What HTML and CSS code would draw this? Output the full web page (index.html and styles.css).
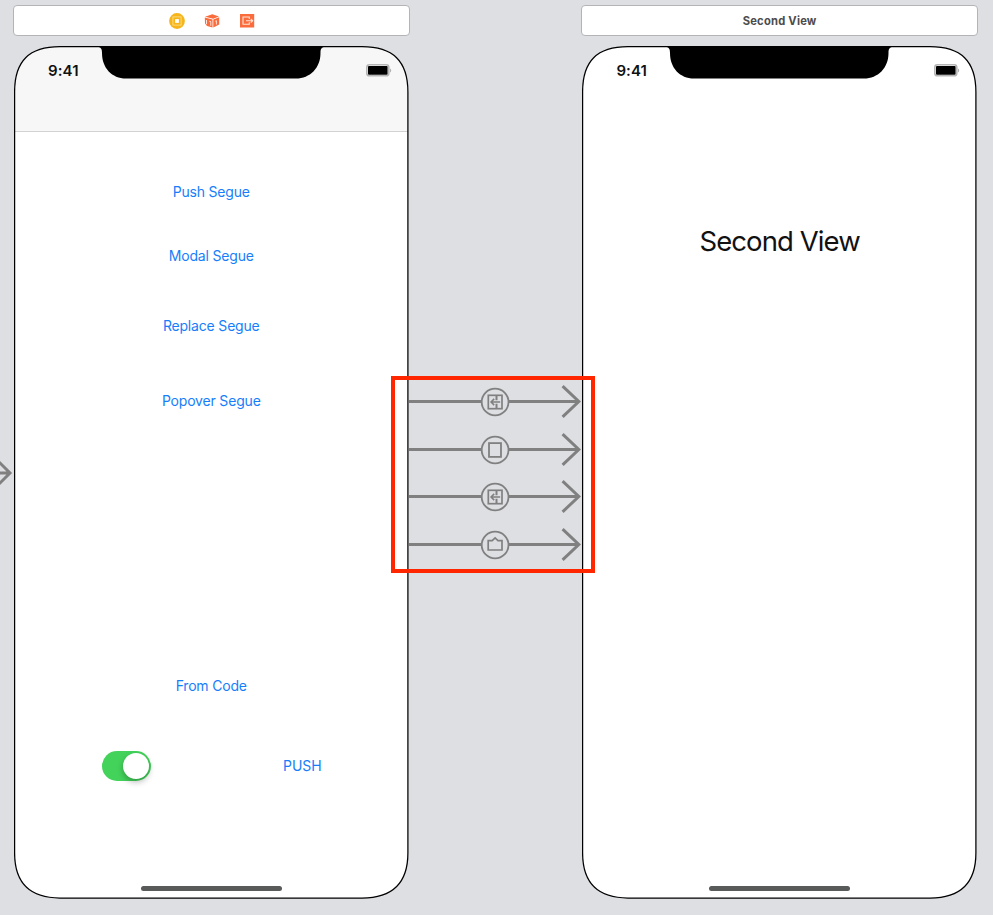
FILE: index.html
```html
<!DOCTYPE html>
<html lang="en">
<head>
<meta charset="utf-8">
<title>Storyboard</title>
<link rel="stylesheet" href="styles.css">
</head>
<body>
<svg class="defs" width="0" height="0" aria-hidden="true">
  <defs>
    <path id="outline" d="M.6 46C.6 15 15 .7 46 .7H348C379 .7 393.9 15 393.9 46V807C393.9 837 379 852 348 852H46C15 852 .6 837 .6 807Z"/>
    <clipPath id="screen"><use href="#outline"/></clipPath>
    <path id="notch" d="M83 .5C87 1 88 3 88 7C88 22 98 32.5 112 32.5H282C296 32.5 306.5 22 306.5 7C306.5 3 307.5 1 311.5 .5Z"/>
    <g id="battery">
      <rect x=".8" y=".8" width="22" height="11" rx="2.6" fill="#fff" stroke="#b5b5b5" stroke-width="1.6"/>
      <rect x="2" y="2" width="19.6" height="8.8" rx="1"/>
      <path d="M24 4.4C25.6 4.9 25.6 7.9 24 8.4Z" fill="#b0b0b0"/>
    </g>
    <g id="segue" fill="none" stroke="#808080">
      <path d="M0 16.5H73M100 16.5H170" stroke-width="3"/>
      <path d="M153.6 1.2L169.8 16.5L153.6 31.8" stroke-width="3"/>
      <circle cx="86.1" cy="17" r="13.4" stroke-width="1.8"/>
    </g>
    <g id="show" fill="none" stroke="#808080">
      <rect x="79.3" y="10.3" width="13.7" height="13.4" stroke-width="1.7"/>
      <path d="M87.5 10.5V15.2M87.5 18.8V24" stroke-width="2"/>
      <path d="M82 17H91.2M85.2 13.9L82.1 17L85.2 20.1" stroke-width="1.6"/>
    </g>
  </defs>
</svg>
<main class="canvas">
  <section class="scene">
    <header class="dock icons">
      <svg width="16" height="16" viewBox="0 0 16 16"><circle cx="8" cy="8" r="7.9" fill="#f5b51b"/><rect x="3.9" y="3.9" width="8.2" height="8.2" fill="none" stroke="#ffe394" stroke-width=".8"/><rect x="6.1" y="6.1" width="3.8" height="3.8" fill="#fff"/></svg>
      <svg width="16" height="16" viewBox="0 0 16 16"><path d="M1 3.8L8.3 1.2L15 3.5L9.2 5.7Z M.8 4.6L8.5 6.4V14.5L3 13L1 10.5Z M9.3 6.4L15.2 4.2V11.4L9.3 14.5Z" fill="#fa6c3c"/><path d="M2.5 7V11.2M5.2 8.2L6.8 8.6V12.8M11.3 8.2L12.4 7.7V11.5" fill="none" stroke="#fff" stroke-width=".8"/></svg>
      <svg width="16" height="16" viewBox="0 0 16 16"><rect x="1" y="1" width="14.2" height="13.5" fill="#fa6c3c"/><path d="M10.3 6.1V4H4V11.3H10.3V9.3M7 7.7H13.7M11.8 5.8L13.7 7.7L11.8 9.6" fill="none" stroke="#ffe3d8" stroke-width="1.1"/></svg>
    </header>
    <div class="phone">
      <svg class="frame" width="395" height="853" viewBox="0 0 395 853">
        <use href="#outline" fill="#fff"/>
        <g clip-path="url(#screen)"><rect width="395" height="85" fill="#f7f7f7"/><rect y="85" width="395" height="1" fill="#d2d2d2"/></g>
        <use href="#outline" fill="none" stroke="#000" stroke-width="1.25"/><use href="#notch"/>
      </svg>
      <div class="status"><span>9:41</span><svg width="26" height="13"><use href="#battery"/></svg></div>
      <div class="actions">
        <a class="push">Push Segue</a>
        <a class="modal">Modal Segue</a>
        <a class="replace">Replace Segue</a>
        <a class="popover">Popover Segue</a>
        <a class="code">From Code</a>
      </div>
      <div class="controls"><span class="switch"><i></i></span><a class="push-button">PUSH</a></div>
      <div class="home"></div>
    </div>
  </section>
  <section class="segues">
    <svg width="173" height="34"><use href="#segue"/><use href="#show"/></svg>
    <svg width="173" height="34"><use href="#segue"/><rect x="80" y="10.1" width="12" height="13.8" fill="none" stroke="#808080" stroke-width="1.8"/></svg>
    <svg width="173" height="34"><use href="#segue"/><use href="#show"/></svg>
    <svg width="173" height="34"><use href="#segue"/><path d="M79.2 12.6H83.2L86.1 9.9L89 12.6H93V22H79.2Z" fill="none" stroke="#808080" stroke-width="1.7"/></svg>
  </section>
  <section class="scene">
    <header class="dock title">Second View</header>
    <div class="phone">
      <svg class="frame" width="395" height="853" viewBox="0 0 395 853"><use href="#outline" fill="#fff" stroke="#000" stroke-width="1.25"/><use href="#notch"/></svg>
      <div class="status"><span>9:41</span><svg width="26" height="13"><use href="#battery"/></svg></div>
      <h1>Second View</h1>
      <div class="home"></div>
    </div>
  </section>
  <svg class="entry" width="13" height="30"><path d="M0 15H10M-5 0L10 15L-5 30" fill="none" stroke="#808080" stroke-width="3"/></svg>
  <div class="highlight"></div>
</main>
</body>
</html>
```
FILE: styles.css
```css
* { box-sizing: border-box; }
body { margin: 0; background: #dedfe3; font-family: Inter, "Liberation Sans", sans-serif; }
.defs { position: absolute; }
.canvas {
  position: relative;
  display: grid;
  grid-template-columns: 395px 173.4px 395px;
  width: 993px;
  height: 915px;
  padding: 5px 0 0 14px;
  overflow: hidden;
}
.scene { display: flex; flex-direction: column; }
.dock {
  display: flex;
  align-items: center;
  justify-content: center;
  gap: 19px;
  width: 396.5px;
  height: 31px;
  margin: 0 0 10px -1px;
  background: #fff;
  border: 1px solid #b4b4b6;
  border-radius: 4px;
}
.icons { padding-left: 1px; }
.title { color: #4c4c4c; font-size: 11.2px; font-weight: 700; letter-spacing: .22px; padding-top: 1px; }
.phone { position: relative; display: flex; flex-direction: column; width: 394.5px; height: 853px; }
.frame { position: absolute; left: 0; top: 0; }
.status, .actions, .controls, .home, h1 { position: relative; }
.status {
  display: flex;
  align-items: center;
  justify-content: space-between;
  height: 20px;
  margin-top: 14.5px;
  padding: 0 16.5px 0 34px;
  color: #111;
  font-size: 15px;
  font-weight: 600;
}
.status span { letter-spacing: .1px; }
.actions { display: flex; flex-direction: column; align-items: center; color: #167efb; font-size: 14px; line-height: 20px; letter-spacing: -.18px; }
.push { margin-top: 101px; }
.modal { margin-top: 44px; }
.replace { margin-top: 50px; }
.popover { margin-top: 55px; }
.code { margin-top: 265px; }
.controls { display: flex; align-items: center; height: 30px; margin-top: 55px; padding-left: 88px; color: #167efb; font-size: 14px; }
.switch { display: flex; justify-content: flex-end; width: 49px; height: 30px; padding: 2px; border-radius: 15px; background: #43d35b; }
.switch i { width: 26px; height: 26px; border-radius: 50%; background: #fff; box-shadow: 0 3px 6px rgba(0, 0, 0, .28); }
.push-button { margin-left: 132px; }
.home { width: 141px; height: 5px; margin: auto auto 8px; border-radius: 3px; background: #595b5a; }
h1 { margin: 142px 0 0; color: #111; font-size: 27.5px; font-weight: 400; line-height: 36px; letter-spacing: -.9px; text-align: center; }
.segues { display: flex; flex-direction: column; gap: 13.5px; padding: 380px 0 0; }
.segues svg { display: block; flex: none; }
.entry { position: absolute; left: 0; top: 458px; }
.highlight { position: absolute; left: 391px; top: 376px; width: 204px; height: 197px; border: 4px solid #ff2600; }
```
